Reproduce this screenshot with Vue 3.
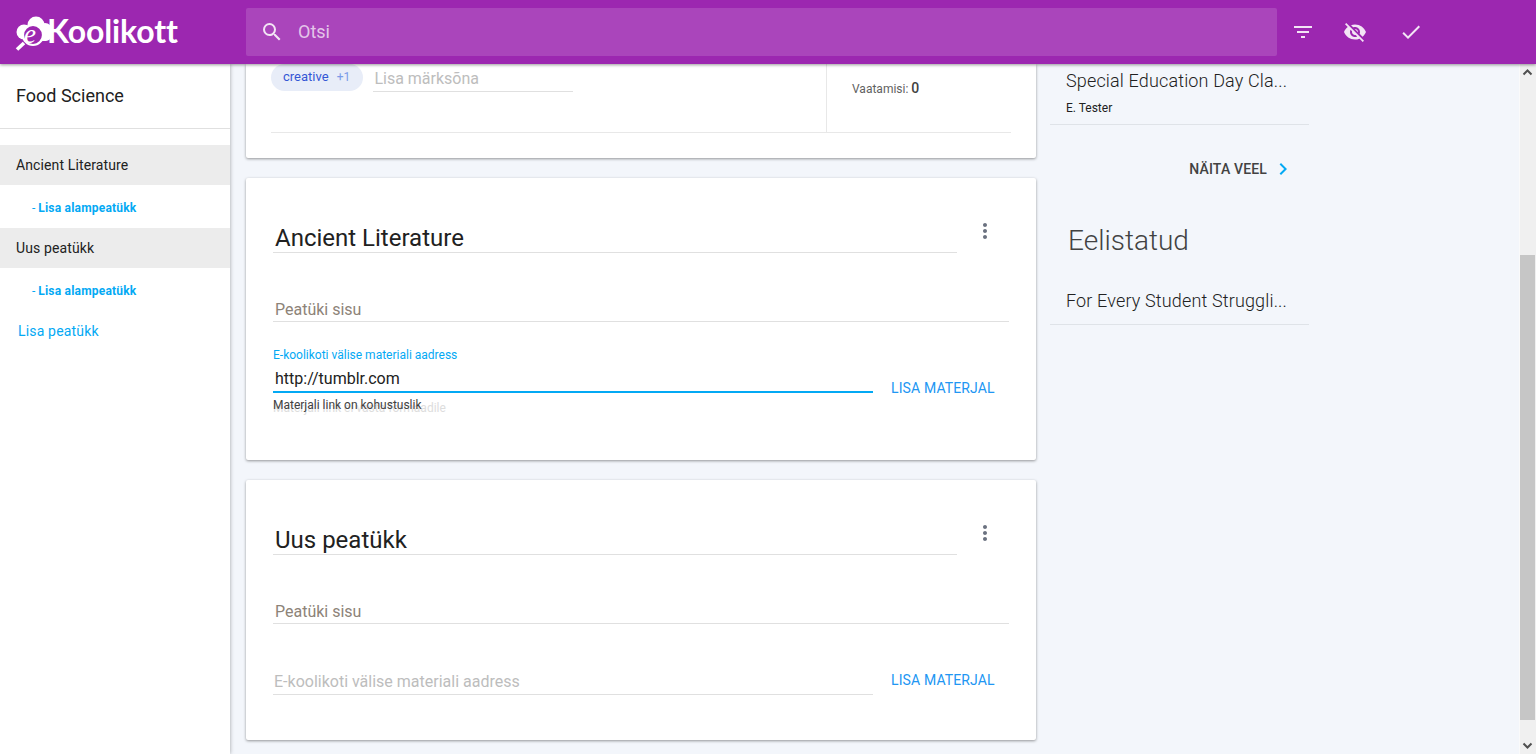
<script setup>
const chapters = [
  { title: "Ancient Literature" },
  { title: "Uus peatükk" }
];
</script>

<template>
  <div class="page">
    <header class="toolbar">
      <div class="logo">
        <svg class="logo-mark" width="38" height="38" viewBox="0 0 38 38">
          <g fill="#fff">
            <circle cx="10" cy="18" r="7.5" />
            <circle cx="22" cy="11" r="8.5" />
            <circle cx="31" cy="16" r="7" />
            <rect x="18" y="14" width="19" height="13" rx="5" />
          </g>
          <circle cx="19" cy="21" r="10" fill="#9c27b0" stroke="#fff" stroke-width="2.2" />
          <path d="M10 29L3 35.5" stroke="#fff" stroke-width="3.6" />
          <text x="10" y="29" class="logo-e">e</text>
        </svg>
        <span class="logo-text">Koolikott</span>
      </div>
      <div class="search">
        <svg width="24" height="24" viewBox="0 0 24 24" class="search-icon">
          <path fill="currentColor" d="M15.5 14h-.79l-.28-.27A6.47 6.47 0 0 0 16 9.5 6.5 6.5 0 1 0 9.5 16c1.61 0 3.09-.59 4.23-1.57l.27.28v.79l5 4.99L20.49 19l-4.99-5zm-6 0C7.01 14 5 11.99 5 9.5S7.01 5 9.5 5 14 7.01 14 9.5 11.99 14 9.5 14z" />
        </svg>
        <span class="search-text">Otsi</span>
      </div>
      <div class="tools">
        <svg width="24" height="24" viewBox="0 0 24 24"><path fill="currentColor" d="M10 18h4v-2h-4v2zM3 6v2h18V6H3zm3 7h12v-2H6v2z" /></svg>
        <svg class="tool-eye" width="24" height="24" viewBox="0 0 24 24"><path fill="currentColor" d="M12 7c2.76 0 5 2.24 5 5 0 .65-.13 1.26-.36 1.83l2.92 2.92c1.51-1.26 2.7-2.89 3.43-4.75-1.73-4.39-6-7.5-11-7.5-1.4 0-2.74.25-3.98.7l2.16 2.16C10.74 7.13 11.35 7 12 7zM2 4.27l2.28 2.28.46.46C3.08 8.3 1.78 10.02 1 12c1.73 4.39 6 7.5 11 7.5 1.55 0 3.03-.3 4.38-.84l.42.42L19.73 22 21 20.73 3.27 3 2 4.27zM7.53 9.8l1.55 1.55c-.05.21-.08.43-.08.65 0 1.66 1.34 3 3 3 .22 0 .44-.03.65-.08l1.55 1.55c-.67.33-1.41.53-2.2.53-2.76 0-5-2.24-5-5 0-.79.2-1.53.53-2.2zm4.31-.78l3.15 3.15.02-.16c0-1.66-1.34-3-3-3l-.17.01z" /></svg>
        <svg width="24" height="24" viewBox="0 0 24 24"><path fill="currentColor" d="M9 16.17L4.83 12l-1.42 1.41L9 19 21 7l-1.41-1.41z" /></svg>
      </div>
    </header>

    <div class="body">
      <aside class="sidebar">
        <div class="side-title">Food Science</div>
        <nav class="side-nav">
          <template v-for="c in chapters" :key="c.title">
            <div class="side-chapter">{{ c.title }}</div>
            <a class="side-sub">- <b>Lisa alampeatükk</b></a>
          </template>
          <a class="side-add">Lisa peatükk</a>
        </nav>
      </aside>

      <main class="content">
        <div class="column">
          <section class="card top-card">
            <div class="top-row">
              <div class="tags">
                <span class="chip">creative <i>+1</i></span>
                <div class="tag-input">Lisa märksõna</div>
              </div>
              <div class="views">Vaatamisi: <b>0</b></div>
            </div>
          </section>

          <section v-for="(c, i) in chapters" :key="c.title" class="card chapter">
            <div class="chapter-head">
              <h2 class="chapter-title">{{ c.title }}</h2>
              <svg class="more" width="24" height="24" viewBox="0 0 24 24"><path fill="currentColor" d="M12 8c1.1 0 2-.9 2-2s-.9-2-2-2-2 .9-2 2 .9 2 2 2zm0 2c-1.1 0-2 .9-2 2s.9 2 2 2 2-.9 2-2-.9-2-2-2zm0 6c-1.1 0-2 .9-2 2s.9 2 2 2 2-.9 2-2-.9-2-2-2z" /></svg>
            </div>
            <div class="body-field">Peatüki sisu</div>
            <div class="link-row" :class="{ active: i === 0 }">
              <div class="link-field">
                <template v-if="i === 0">
                  <label>E-koolikoti välise materiali aadress</label>
                  <div class="link-value">http://tumblr.com</div>
                  <div class="link-error">
                    <span class="ghost">Materjali link ei vasta formaadile</span>
                    <span>Materjali link on kohustuslik</span>
                  </div>
                </template>
                <div v-else class="link-empty">E-koolikoti välise materiali aadress</div>
              </div>
              <a class="add-btn">LISA MATERJAL</a>
            </div>
          </section>
        </div>

        <aside class="right">
          <div class="item first">
            <div class="item-title">Special Education Day Cla...</div>
            <div class="item-author">E. Tester</div>
          </div>
          <a class="show-more">
            NÄITA VEEL
            <svg width="24" height="24" viewBox="0 0 24 24"><path fill="#03a9f4" d="M10 6L8.59 7.41 13.17 12l-4.58 4.59L10 18l6-6z" /></svg>
          </a>
          <h3 class="right-head">Eelistatud</h3>
          <div class="item">
            <div class="item-title">For Every Student Struggli...</div>
          </div>
        </aside>

        <div class="scrollbar">
          <svg width="16" height="17" viewBox="0 0 16 17"><path d="M3.5 10.5L7.5 6.5L11.5 10.5" fill="none" stroke="#505050" stroke-width="2" /></svg>
          <div class="track"><div class="thumb"></div></div>
          <svg width="16" height="17" viewBox="0 0 16 17"><path d="M3.5 6.5L7.5 10.5L11.5 6.5" fill="none" stroke="#505050" stroke-width="2" /></svg>
        </div>
      </main>
    </div>
  </div>
</template>

<style>
html, body { margin: 0; overflow: hidden; }
</style>

<style scoped>
.page {
  height: 754px;
  display: flex;
  flex-direction: column;
  font-family: Roboto, "Liberation Sans", sans-serif;
  color: #212121;
  background: #f3f6fb;
  overflow: hidden;
}
.toolbar {
  height: 64px;
  flex: none;
  display: flex;
  align-items: center;
  background: #9c27b0;
  color: #f3e5f5;
  box-shadow: 0 1px 3px rgba(0,0,0,.4);
  position: relative;
  z-index: 3;
}
.logo {
  width: 246px;
  flex: none;
  display: flex;
  align-items: center;
  padding-left: 14px;
  box-sizing: border-box;
  color: #fff;
}
.logo-mark { margin-top: 2px; flex: none; }
.logo-e { font: italic 27px "Liberation Serif", serif; fill: #fff; }
.logo-text {
  font-family: Lato, Roboto, sans-serif;
  font-size: 32px;
  font-weight: 700;
  margin-left: -5px;
  margin-top: -4px;
  letter-spacing: -0.1px;
}
.search {
  width: 1031px;
  height: 48px;
  border-radius: 2px;
  background: rgba(255,255,255,.14);
  display: flex;
  align-items: center;
  padding-left: 14px;
  box-sizing: border-box;
  color: rgba(255,255,255,.7);
}
.search-icon { margin-right: 14px; color: #f3e5f5; }
.search-text { font-size: 18px; margin-top: -1px; }
.tools {
  display: flex;
  gap: 28px;
  margin-left: 14px;
}
.tool-eye { margin-right: 4px; }
.body {
  flex: 1;
  min-height: 0;
  display: flex;
}
.sidebar {
  width: 230px;
  flex: none;
  background: #fff;
  box-shadow: 0 0 4px rgba(0,0,0,.35);
  position: relative;
  z-index: 2;
}
.side-title {
  height: 64px;
  line-height: 64px;
  padding-left: 16px;
  font-size: 18px;
  border-bottom: 1px solid #e0e0e0;
}
.side-nav { padding-top: 16px; display: flex; flex-direction: column; }
.side-chapter {
  height: 40px;
  line-height: 40px;
  padding-left: 16px;
  font-size: 14px;
  letter-spacing: .12px;
  background: #ececec;
}
.side-sub {
  height: 43px;
  line-height: 46px;
  padding-left: 32px;
  font-size: 12px;
  color: #03a9f4;
}
.side-sub b { font-weight: 700; letter-spacing: .2px; }
.side-add {
  font-size: 14px;
  letter-spacing: .17px;
  color: #03a9f4;
  padding-left: 18px;
  margin-top: 8px;
  line-height: 24px;
}
.content {
  flex: 1;
  min-width: 0;
  display: flex;
}
.column {
  width: 790px;
  margin-left: 16px;
  flex: none;
  display: flex;
  flex-direction: column;
  gap: 20px;
}
.card {
  background: #fff;
  border-radius: 2px;
  box-shadow: 0 1px 3px rgba(0,0,0,.4);
  box-sizing: border-box;
}
.top-card { height: 94px; padding: 0 25px; border-radius: 0 0 2px 2px; }
.top-row {
  height: 69px;
  display: flex;
  border-bottom: 1px solid #e8e8e8;
  box-sizing: border-box;
}
.tags {
  flex: 1;
  display: flex;
  align-items: flex-start;
  gap: 10px;
  border-right: 1px solid #e8e8e8;
}
.chip {
  height: 27px;
  line-height: 26px;
  padding: 0 13px 0 12px;
  border-radius: 14px;
  background: #e8edf8;
  color: #3457d5;
  font-size: 13px;
  white-space: nowrap;
}
.chip i {
  font-style: normal;
  color: #7b9be8;
  font-size: 12px;
  margin-left: 5px;
}
.tag-input {
  width: 200px;
  height: 28px;
  line-height: 29px;
  border-bottom: 1px solid #e0e0e0;
  color: #bdbdbd;
  font-size: 16px;
  box-sizing: border-box;
  padding-left: 1px;
}
.views {
  width: 184px;
  padding: 16px 0 0 25px;
  box-sizing: border-box;
  font-size: 12px;
  color: #616161;
}
.views b { font-size: 14px; font-weight: 500; color: #424242; }
.chapter {
  height: 282px;
  padding: 0 27px;
  position: relative;
}
.chapter + .chapter { height: 260px; }
.chapter-head {
  height: 75px;
  display: flex;
  align-items: flex-end;
  justify-content: space-between;
}
.chapter-title {
  width: 684px;
  height: 32px;
  line-height: 34px;
  margin: 0;
  padding-left: 2px;
  box-sizing: border-box;
  font-size: 24px;
  font-weight: 400;
  border-bottom: 1px solid #e0e0e0;
}
.more {
  color: #6b7280;
  margin: 0 12px 10px 0;
}
.body-field {
  margin-top: 45px;
  height: 23px;
  line-height: 23px;
  padding-left: 2px;
  font-size: 16px;
  color: #8d8378;
  border-bottom: 1px solid #e0e0e0;
}
.link-row {
  display: flex;
  margin-top: 26px;
}
.link-field { width: 600px; flex: none; }
.link-field label {
  display: block;
  font-size: 12px;
  line-height: 14px;
  color: #03a9f4;
}
.link-value {
  height: 27px;
  line-height: 26px;
  font-size: 16px;
  padding-left: 2px;
  margin-top: 4px;
  box-sizing: border-box;
  border-bottom: 2px solid #03a9f4;
}
.link-error {
  position: relative;
  font-size: 12px;
  color: #424242;
  line-height: 14px;
  margin-top: 5px;
}
.ghost {
  position: absolute;
  left: 0;
  top: 3px;
  color: #ddd;
  white-space: nowrap;
}
.link-error span:last-child { position: relative; }
.link-empty {
  margin-top: 20px;
  height: 24px;
  line-height: 24px;
  font-size: 16px;
  color: #bdbdbd;
  padding-left: 1px;
  border-bottom: 1px solid #e0e0e0;
}
.add-btn {
  margin-left: 18px;
  font-size: 14px;
  letter-spacing: .13px;
  color: #2196f3;
  line-height: 16px;
  padding-top: 22px;
  white-space: nowrap;
}
.active .add-btn { padding-top: 32px; }
.right {
  width: 259px;
  margin-left: 14px;
  flex: none;
}
.item {
  border-bottom: 1px solid #dfe3e8;
  padding-left: 16px;
}
.item-title {
  font-size: 18px;
  font-weight: 300;
  letter-spacing: .15px;
  line-height: 24px;
  color: #212121;
  white-space: nowrap;
}
.item.first .item-title { padding-top: 5px; }
.item-author {
  font-size: 12px;
  line-height: 14px;
  padding: 8px 0 9px;
  color: #212121;
}
.item:last-child { padding-bottom: 11px; }
.show-more {
  display: flex;
  align-items: center;
  justify-content: flex-end;
  margin: 32px 14px 0 0;
  gap: 4px;
  font-size: 14px;
  letter-spacing: .15px;
  font-weight: 500;
  color: #424242;
}
.right-head {
  margin: 42px 0 30px 18px;
  font-size: 28px;
  font-weight: 300;
  line-height: 36px;
  color: #424242;
}
.scrollbar {
  width: 17px;
  margin-left: auto;
  flex: none;
  box-sizing: border-box;
  border-left: 1px solid #fafafa;
  background: #f0f0f0;
  display: flex;
  flex-direction: column;
}
.track {
  flex: 1;
  display: flex;
  flex-direction: column;
  justify-content: flex-start;
}
.thumb {
  margin: 174px 1px 0 0;
  height: 465px;
  background: #c6c6c6;
}
</style>
